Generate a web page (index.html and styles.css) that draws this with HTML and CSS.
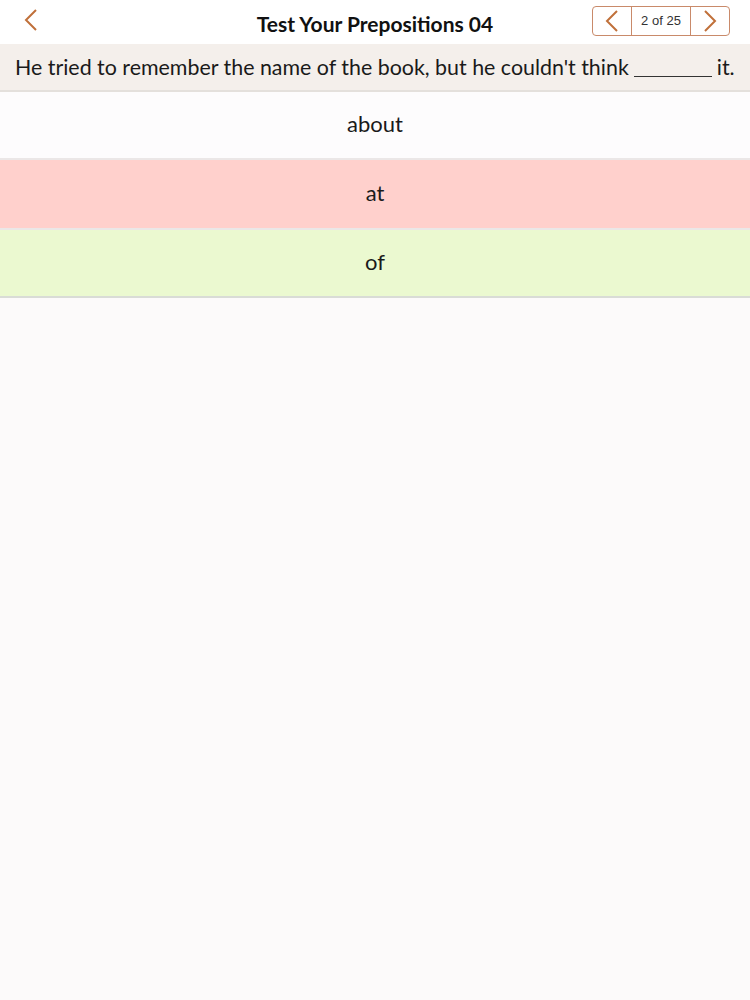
FILE: index.html
```html
<!DOCTYPE html>
<html lang="en">
<head>
    <meta charset="UTF-8">
    <meta name="viewport" content="width=device-width, initial-scale=1.0">
    <link rel="stylesheet" href="styles.css">
    <title>Test Your Prepositions 04</title>
</head>
<body>

<header class="topbar">
    <a class="back" href="#">
        <svg width="16" height="24" viewBox="0 0 16 24"><path d="M13 2 L3 12 L13 22" fill="none" stroke="#c0703a" stroke-width="2"/></svg>
    </a>
    <h1>Test Your Prepositions 04</h1>
    <div class="pager">
        <button class="pager-btn">
            <svg width="14" height="22" viewBox="0 0 14 22"><path d="M12 1 L2 11 L12 21" fill="none" stroke="#c0703a" stroke-width="2"/></svg>
        </button>
        <span class="pager-count">2 of 25</span>
        <button class="pager-btn">
            <svg width="14" height="22" viewBox="0 0 14 22"><path d="M2 1 L12 11 L2 21" fill="none" stroke="#c0703a" stroke-width="2"/></svg>
        </button>
    </div>
</header>

<div class="question">He tried to remember the name of the book, but he couldn't think <span class="blank"></span> it.</div>

<ul class="answers">
    <li class="answer">about</li>
    <li class="answer wrong">at</li>
    <li class="answer right">of</li>
</ul>

</body>
</html>
```

FILE: styles.css
```css
body {
    font-family: 'Lato', 'Open Sans', sans-serif;
    background-color: #fcfafa;
    margin: 0;
    color: #1a1a1a;
}

.topbar {
    height: 44px;
    background-color: #fff;
    display: flex;
    align-items: center;
    justify-content: space-between;
    padding: 0 20px 0 23px;
    position: relative;
}

.back {
    display: flex;
    margin-top: -4px;
}

h1 {
    position: absolute;
    left: 0;
    right: 0;
    top: 11px;
    margin: 0;
    text-align: center;
    font-size: 21px;
    font-weight: 700;
    color: #111;
    pointer-events: none;
}

.pager {
    display: flex;
    height: 28px;
    border: 1px solid #c98a6a;
    border-radius: 4px;
    margin-top: -3px;
    background-color: #fff;
}

.pager-btn {
    width: 38px;
    border: none;
    background: none;
    padding: 0;
    display: flex;
    align-items: center;
    justify-content: center;
    cursor: pointer;
}

.pager-count {
    width: 58px;
    border-left: 1px solid #c98a6a;
    border-right: 1px solid #c98a6a;
    display: flex;
    align-items: center;
    justify-content: center;
    font-family: 'Liberation Sans', Arial, sans-serif;
    font-size: 13px;
    color: #333;
}

.question {
    height: 46px;
    background-color: #f4efeb;
    border-bottom: 2px solid #e4e0dc;
    display: flex;
    align-items: center;
    padding: 0 15px;
    font-size: 21.4px;
    white-space: nowrap;
}

.blank {
    display: inline-block;
    width: 78px;
    border-bottom: 1px solid #333;
    margin: 0 5px;
    height: 18px;
}

.answers {
    list-style: none;
    margin: 0;
    padding: 0;
}

.answer {
    height: 63px;
    padding-bottom: 3px;
    display: flex;
    align-items: center;
    justify-content: center;
    font-size: 22px;
    background-color: #fdfcfd;
    border-bottom: 2px solid #ebe7e7;
}

.answer.wrong {
    background-color: #ffd0cc;
    height: 65px;
}

.answer.right {
    background-color: #ebf9d0;
    border-bottom-color: #d9dcd6;
}
```
